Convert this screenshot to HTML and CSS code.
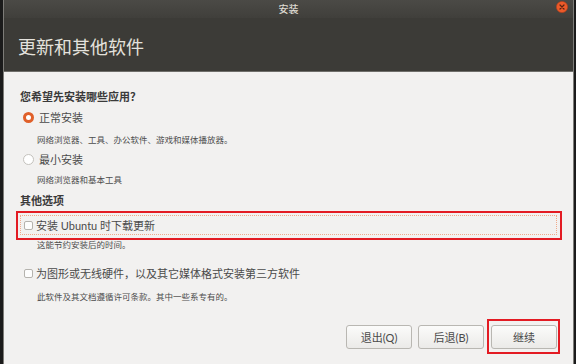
FILE: index.html
```html
<!DOCTYPE html>
<html>
<head>
  <title>安装</title>
  <meta charset="utf-8">
  <link rel="stylesheet" href="styles.css">
</head>
<body>
  <div class="window">
    <!-- Title bar -->
    <div class="titlebar">
      <span class="title">安装</span>
      <span class="close">
        <svg width="12" height="12" viewBox="0 0 12 12">
          <circle cx="6" cy="6" r="5.6" fill="#ec5a2a" stroke="#b8401a" stroke-width="0.6"/>
          <path d="M4 4 L8 8 M8 4 L4 8" stroke="#5a2310" stroke-width="1.2" stroke-linecap="round"/>
        </svg>
      </span>
    </div>

    <!-- Page header -->
    <div class="header">
      <h1>更新和其他软件</h1>
    </div>

    <div class="content">
      <div class="heading">您希望先安装哪些应用？</div>
      <div class="option"><span class="radio checked"></span>正常安装</div>
      <div class="desc">网络浏览器、工具、办公软件、游戏和媒体播放器。</div>
      <div class="option option-min"><span class="radio"></span>最小安装</div>
      <div class="desc">网络浏览器和基本工具</div>

      <div class="heading heading-other">其他选项</div>
      <div class="check-row focused marked">
        <span class="checkbox"></span>安装 Ubuntu 时下载更新
      </div>
      <div class="desc desc-updates">这能节约安装后的时间。</div>
      <div class="check-row check-third">
        <span class="checkbox"></span>为图形或无线硬件，以及其它媒体格式安装第三方软件
      </div>
      <div class="desc desc-third">此软件及其文档遵循许可条款。其中一些系专有的。</div>

      <div class="buttons">
        <button class="btn">退出(Q)</button>
        <button class="btn">后退(B)</button>
        <button class="btn btn-next marked">继续</button>
      </div>
    </div>
  </div>
</body>
</html>
```

FILE: styles.css
```css
body {
  margin: 0;
  width: 576px;
  height: 364px;
  overflow: hidden;
  background: #1b1b1b;
  font-family: Lato, "Noto Sans CJK SC", sans-serif;
}

.window {
  margin: 0 2px 0 3px;
  height: 364px;
  border-left: 1px solid #7d7c78;
  border-right: 1px solid #7d7c78;
  display: flex;
  flex-direction: column;
}

.titlebar {
  position: relative;
  height: 18px;
  display: flex;
  justify-content: center;
  align-items: center;
  background: linear-gradient(#4b4a46, #403f3b);
}

.title {
  color: #dfdbd2;
  font-size: 10px;
  font-weight: 500;
  line-height: 14px;
}

.close {
  position: absolute;
  right: 5px;
  top: 1px;
  width: 12px;
  height: 12px;
}

.close svg {
  display: block;
}

.header {
  height: 53px;
  padding: 0 0 0 14px;
  background: #3c3b37;
  border-bottom: 1px solid #6f6e6a;
  display: flex;
  align-items: center;
}

.header h1 {
  margin: 4px 0 0;
  color: #e4e2dd;
  font-size: 18px;
  font-weight: 400;
  line-height: 24px;
}

.content {
  flex: 1;
  background: #f2f1f0;
  padding: 16px 16px 0;
  color: #3c3c3c;
}

.heading {
  font-family: "Noto Sans CJK SC", sans-serif;
  font-size: 11px;
  font-weight: 700;
  line-height: 16px;
  color: #3a3a3a;
}

.option {
  margin-top: 3px;
  display: flex;
  align-items: center;
  height: 20px;
  padding-left: 3px;
  font-size: 11px;
  color: #4a4a4a;
}

.option-min {
  margin-top: 2px;
}

.radio {
  width: 11px;
  height: 11px;
  box-sizing: border-box;
  border-radius: 50%;
  border: 1px solid #c4c2bd;
  background: #fff;
  margin-right: 5px;
}

.radio.checked {
  border: 3px solid #e0602a;
  background: #fff;
}

.desc {
  margin-top: 6px;
  padding-left: 17px;
  font-size: 8.5px;
  line-height: 14px;
  color: #4d4d4d;
}

.option-min + .desc {
  margin-top: 4px;
}

.heading-other {
  margin-top: 5px;
}

.check-row {
  position: relative;
  display: flex;
  align-items: center;
  height: 20px;
  box-sizing: border-box;
  padding-left: 3px;
  font-size: 11px;
  color: #4a4a4a;
}

.focused {
  margin-top: 7px;
  border: 1px dotted #f0a98a;
}

.checkbox {
  width: 9px;
  height: 9px;
  box-sizing: border-box;
  border: 1px solid #b5b3ae;
  border-radius: 2px;
  background: #fdfdfd;
  margin-right: 3px;
}

.desc-updates {
  margin-top: 3px;
}

.check-third {
  margin-top: 11px;
  padding-left: 4px;
}

.desc-third {
  margin-top: 7px;
}

.buttons {
  margin-top: 21px;
  display: flex;
  justify-content: flex-end;
  gap: 6px;
}

.btn {
  position: relative;
  width: 66px;
  height: 24px;
  border: 1px solid #b9b7b2;
  border-radius: 3px;
  background: linear-gradient(#fbfbfa, #ebeae8);
  font-family: Lato, "Noto Sans CJK SC", sans-serif;
  font-size: 11px;
  color: #4a4a4a;
  padding: 0;
}

.btn-next {
  margin-left: 1px;
}

/* red annotation boxes drawn over the screenshot */
.marked::after {
  content: "";
  position: absolute;
  top: -5px;
  bottom: -6px;
  left: -5px;
  right: -6px;
  border: 2px solid #e31b23;
  pointer-events: none;
}

.btn-next.marked::after {
  top: -7px;
  bottom: -6px;
  left: -5px;
  right: -4px;
}
```
